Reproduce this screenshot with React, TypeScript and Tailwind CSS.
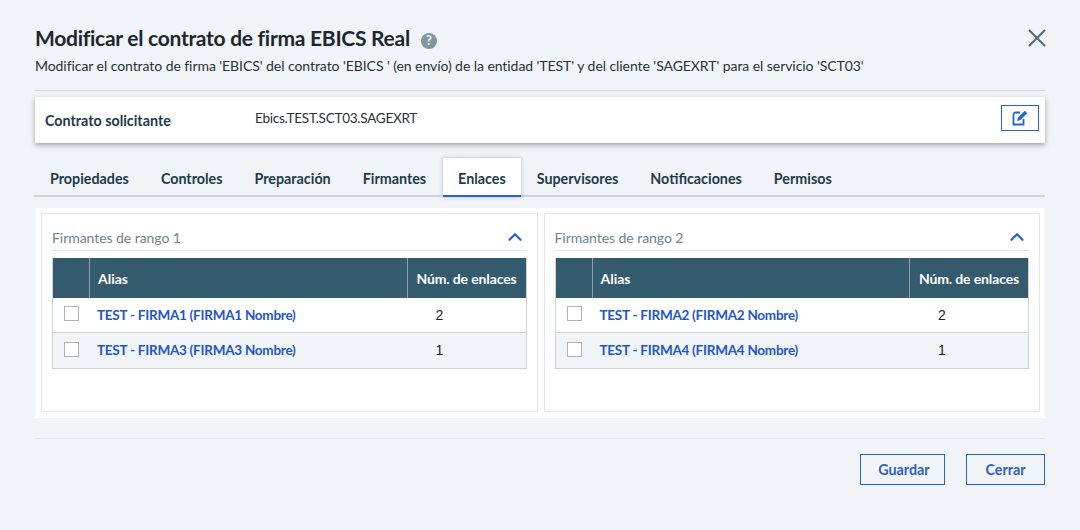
import { X, ChevronUp } from "lucide-react";

const TABS = ["Propiedades", "Controles", "Preparación", "Firmantes", "Enlaces", "Supervisores", "Notificaciones", "Permisos"];

function Rango({ title, rows }: { title: string; rows: { alias: string; n: string }[] }) {
  return (
    <div className="flex-1 h-[199px] border border-[#e1e6e9] pt-[11px] px-[10px]">
      <div className="h-[26px] flex items-center justify-between border-b border-[#e1e6e9] pb-[1px]">
        <span className="text-[14px] text-[#6c8490] tracking-[-0.05px]">{title}</span>
        <ChevronUp className="w-[22px] h-[22px] text-[#2563d0] mb-[1px] mr-[1px]" strokeWidth={2.4} />
      </div>
      <div className="mt-[7px] border border-[#c9d2d9] border-t-0">
        <div className="flex h-[40px] bg-[#345b6d] text-white text-[14px] font-bold">
          <div className="w-[37px] border-r border-[#8ba2ae]" />
          <div className="flex-1 border-r border-[#8ba2ae] flex items-center pl-[8px]">Alias</div>
          <div className="w-[118px] flex items-center justify-center tracking-[-0.13px]">Núm. de enlaces</div>
        </div>
        {rows.map((r, i) => (
          <div key={r.alias} className={`flex items-center ${i === 0 ? "h-[35px] bg-white border-b border-[#c9d2d9]" : "h-[35px] bg-[#f1f4f6]"}`}>
            <div className="w-[37px] flex justify-center">
              <div className="w-[15px] h-[15px] border border-[#b2b2b2] bg-white mb-[3px]" />
            </div>
            <div className="flex-1 pl-[7px] text-[13.5px] tracking-[-0.25px] font-bold text-[#2456c8]">{r.alias}</div>
            <div className="w-[118px] pr-[54px] text-center text-[14px] text-[#222] font-['Liberation_Sans',sans-serif]">{r.n}</div>
          </div>
        ))}
      </div>
    </div>
  );
}

export default function App() {
  return (
    <div className="w-[1080px] h-[530px] overflow-hidden bg-[#f1f4f6] px-[35px] font-['Lato',sans-serif] text-[#1d2b36]">
      <div className="pt-[24px] flex items-start justify-between h-[56px]">
        <div className="flex items-center">
          <h1 className="text-[21px] leading-[28px] font-bold text-[#1b2730] tracking-[-0.27px]">Modificar el contrato de firma EBICS Real</h1>
          <svg viewBox="0 0 16 16" className="w-[16px] h-[16px] ml-[11px] mt-[6px]">
            <circle cx="8" cy="8" r="8" fill="#7f97a5" />
            <text x="8" y="12.2" textAnchor="middle" fontSize="12.5" fontWeight="900" fill="#f1f4f6" fontFamily="Lato">?</text>
          </svg>
        </div>
        <X className="w-[30px] h-[30px] text-[#4d6b7c] -mr-[7px] -mt-[1px]" strokeWidth={1.6} />
      </div>
      <p className="text-[14px] leading-[20px] text-[#25323c] h-[20px] tracking-[-0.065px]">
        Modificar el contrato de firma 'EBICS' del contrato 'EBICS ' (en envío) de la entidad 'TEST' y del cliente 'SAGEXRT' para el servicio 'SCT03'
      </p>
      <div className="mt-[14px] border-t border-[#d5dadf]" />
      <div className="mt-[6px] h-[46px] bg-white shadow-[0_2px_5px_rgba(0,0,0,0.35)] flex items-center pl-[10px] pr-[6px]">
        <span className="w-[210px] text-[14.3px] font-bold text-[#1d3a4c] mt-[1px]">Contrato solicitante</span>
        <span className="flex-1 text-[13.5px] tracking-[-0.25px] text-[#25323c] -mt-[3px]">Ebics.TEST.SCT03.SAGEXRT</span>
        <button className="w-[38px] h-[26px] border border-[#2563d0] flex items-center justify-center -mt-[5px]">
          <svg viewBox="0 0 16 17" className="w-[16px] h-[17px]" fill="none" stroke="#2563d0">
            <path d="M11.5 10v5.5H1.5V5.5a2 2 0 0 1 2-2H8" strokeWidth="1.8" />
            <path d="M5.5 11.5l.7-3L12.8 2l2.2 2.2-6.5 6.6z" fill="#2563d0" strokeWidth="0.5" />
          </svg>
        </button>
      </div>
      <div className="mt-[15px] h-[39px] border-b-2 border-[#cbd5df] flex items-stretch -ml-[1px]">
        {TABS.map((t) =>
          t === "Enlaces" ? (
            <div key={t} className="ml-[1px] px-[15px] h-[39px] pt-[4px] bg-white border-b-2 border-[#2563d0] shadow-[0_0_4px_rgba(80,120,200,0.45)] flex items-center text-[14.3px] font-bold text-[#1d3a4c]">
              {t}
            </div>
          ) : (
            <div key={t} className="px-[16px] h-[37px] pt-[4px] flex items-center text-[14.3px] font-bold text-[#1d3a4c]">
              {t}
            </div>
          )
        )}
      </div>
      <div className="mt-[11px] h-[210px] bg-white flex gap-[6px] pl-[6px] pr-[5px] pt-[5px]">
        <Rango title="Firmantes de rango 1" rows={[{ alias: "TEST - FIRMA1 (FIRMA1 Nombre)", n: "2" }, { alias: "TEST - FIRMA3 (FIRMA3 Nombre)", n: "1" }]} />
        <Rango title="Firmantes de rango 2" rows={[{ alias: "TEST - FIRMA2 (FIRMA2 Nombre)", n: "2" }, { alias: "TEST - FIRMA4 (FIRMA4 Nombre)", n: "1" }]} />
      </div>
      <div className="mt-[20px] border-t border-[#e4e8eb]" />
      <div className="mt-[15px] flex justify-end gap-[21px]">
        <button className="w-[85px] h-[31px] pl-[3px] pt-[1px] border border-[#2563d0] text-[14.3px] font-bold text-[#2d60c0]">Guardar</button>
        <button className="w-[79px] h-[31px] pt-[1px] border border-[#2563d0] text-[14.3px] font-bold text-[#2d60c0]">Cerrar</button>
      </div>
    </div>
  );
}
